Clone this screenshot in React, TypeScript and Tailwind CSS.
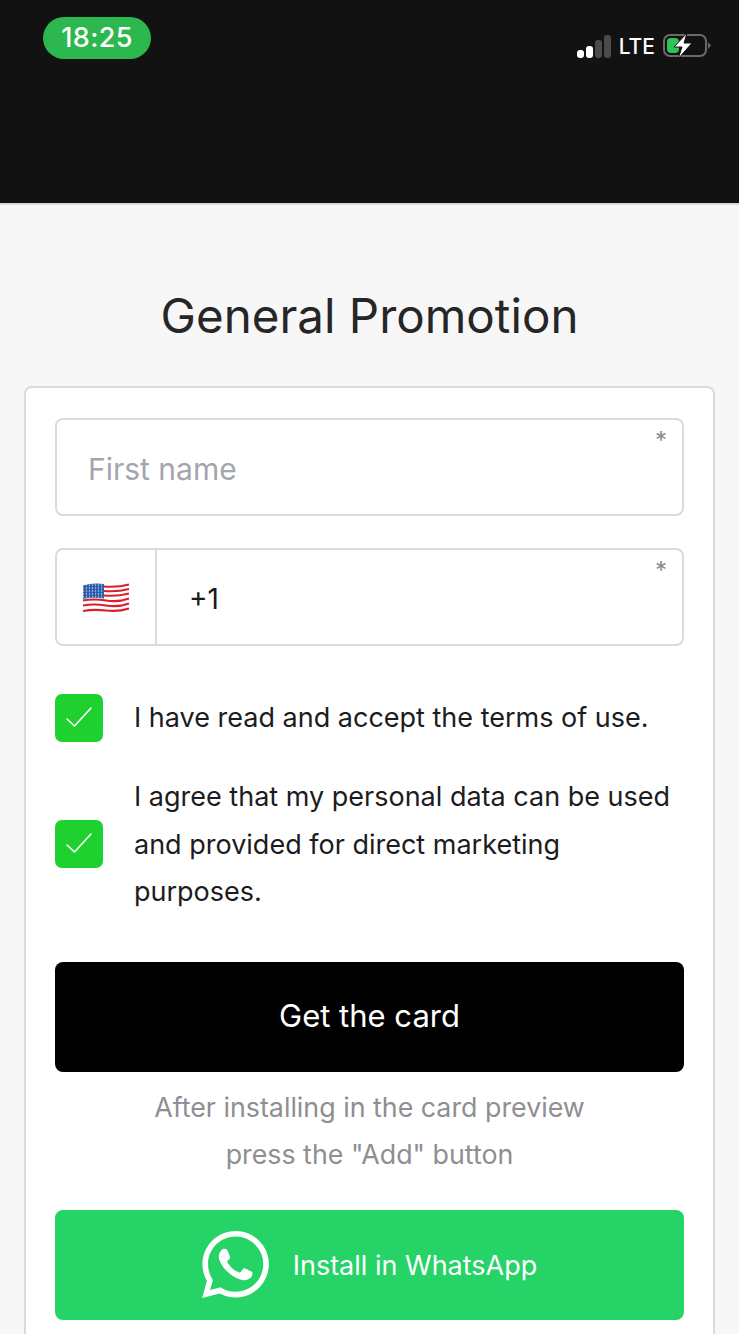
import { SiWhatsapp } from "react-icons/si";

function StatusBar() {
  return (
    <div className="h-[205px] bg-[#121212] border-b-2 border-[#d9d9d9] flex items-start justify-between pl-[43px] pr-[28px]">
      <div className="mt-[17px] w-[108px] h-[42px] pt-[1px] rounded-[21px] bg-[#2cb84f] flex items-center justify-center text-white text-[27px] font-medium tracking-[0.4px]">
        18:25
      </div>
      <div className="mt-[33px] flex items-center h-[26px]">
        <svg className="mt-[2px]" width="36" height="24" viewBox="0 0 36 24">
          <rect x="0" y="15" width="7" height="8" rx="3" fill="#fff" />
          <rect x="9" y="11" width="7" height="12" rx="3" fill="#fff" />
          <rect x="18" y="5" width="7" height="18" rx="3" fill="#4a4a4a" />
          <rect x="27" y="0" width="7" height="23" rx="3" fill="#4a4a4a" />
        </svg>
        <span className="ml-[6px] text-white text-[21px] font-medium leading-none">LTE</span>
        <svg className="ml-[8px]" width="48" height="26" viewBox="0 0 48 26">
          <rect x="1" y="2" width="42" height="21" rx="6" fill="none" stroke="#6a6a6a" strokeWidth="2" />
          <rect x="4" y="5" width="12" height="15" rx="4" fill="#2cc55a" />
          <path d="M45 9 L48 12.5 L45 16 Z" fill="#6a6a6a" />
          <path d="M24 0 L11 14 L19 14 L15 26 L29 10 L21 10 Z" fill="#fff" stroke="#121212" strokeWidth="1" />
        </svg>
      </div>
    </div>
  );
}

function UsFlag() {
  return (
    <svg width="48" height="35" viewBox="0 0 48 34">
      <defs>
        <pattern id="stars" width="3" height="3" patternUnits="userSpaceOnUse">
          <circle cx="1.5" cy="1.5" r="0.7" fill="#dfe8f5" />
        </pattern>
      </defs>
      <path d="M1 5 Q12 1 24 4 T47 2 V29 Q36 32 24 30 T1 32 Z" fill="#fff" />
      <g fill="none" stroke="#d8202c" strokeWidth="2.2">
        <path d="M22 6 Q36 7 47 4" />
        <path d="M22 10.5 Q36 11.5 47 8.5" />
        <path d="M22 15 Q36 16 47 13" />
        <path d="M1 20 Q12 18 24 20 T47 18" />
        <path d="M1 25 Q12 23 24 25 T47 23" />
        <path d="M1 30.5 Q12 28.5 24 30 T47 28" />
      </g>
      <path d="M1 5 Q10 2 22 3.5 V18 Q10 16.5 1 18.5 Z" fill="#2a5ba8" />
      <path d="M1 5 Q10 2 22 3.5 V18 Q10 16.5 1 18.5 Z" fill="url(#stars)" />
    </svg>
  );
}

function Check({ label }: { label: string }) {
  return (
    <label className="flex items-center gap-[31px]">
      <span className="w-[48px] h-[48px] shrink-0 rounded-[7px] bg-[#1ed12f] flex items-center justify-center">
        <svg width="28" height="24" viewBox="0 0 28 24" fill="none" stroke="#fff" strokeWidth="1.6" strokeLinecap="round" strokeLinejoin="round">
          <path d="M2 13 L9.5 20 L26 2" />
        </svg>
      </span>
      <span className="text-[27px] leading-[47.5px] text-[#1c1c1e]">{label}</span>
    </label>
  );
}

export default function App() {
  return (
    <div className="h-[1334px] overflow-hidden bg-[#f7f7f7] font-['Inter',sans-serif]">
      <StatusBar />

      <h1 className="mt-[79px] h-[64px] text-center text-[47.5px] leading-[64px] text-[#262626]">General Promotion</h1>

      <div className="mx-[24px] mt-[38px] rounded-t-[8px] border-2 border-b-0 border-[#d9d9df] bg-white px-[29px] pt-[30px] pb-[40px]">
        <div className="relative h-[98px] rounded-[8px] border-2 border-[#d9d9df] flex items-center pl-[31px] pt-[5px] text-[30px] text-[#a5a5ad]">
          First name
          <span className="absolute right-[15px] top-[3px] text-[24px] text-[#8a8a8f]">*</span>
        </div>

        <div className="relative mt-[32px] h-[98px] rounded-[8px] border-2 border-[#d9d9df] flex items-center text-[28px] text-[#1a1a1a]">
          <div className="w-[100px] h-full border-r-2 border-[#d9d9df] flex items-center justify-center">
            <UsFlag />
          </div>
          <span className="pl-[32px] pt-[3px]">+1</span>
          <span className="absolute right-[15px] top-[3px] text-[24px] text-[#8a8a8f]">*</span>
        </div>

        <div className="mt-[48px] flex flex-col gap-[31px]">
          <Check label="I have read and accept the terms of use." />
          <Check label="I agree that my personal data can be used and provided for direct marketing purposes." />
        </div>

        <button className="mt-[46px] w-full h-[110px] rounded-[8px] bg-black text-white text-[31px]">Get the card</button>

        <p className="mt-[12px] text-center text-[26.8px] leading-[47px] text-[#8e8e93]">
          After installing in the card preview
          <br />
          press the "Add" button
        </p>

        <button className="mt-[32px] w-full h-[110px] rounded-[8px] bg-[#25d366] text-white text-[27px] flex items-center justify-center gap-[24px]">
          <SiWhatsapp size={67} />
          <span className="pt-[3px]">Install in WhatsApp</span>
        </button>
      </div>
    </div>
  );
}
